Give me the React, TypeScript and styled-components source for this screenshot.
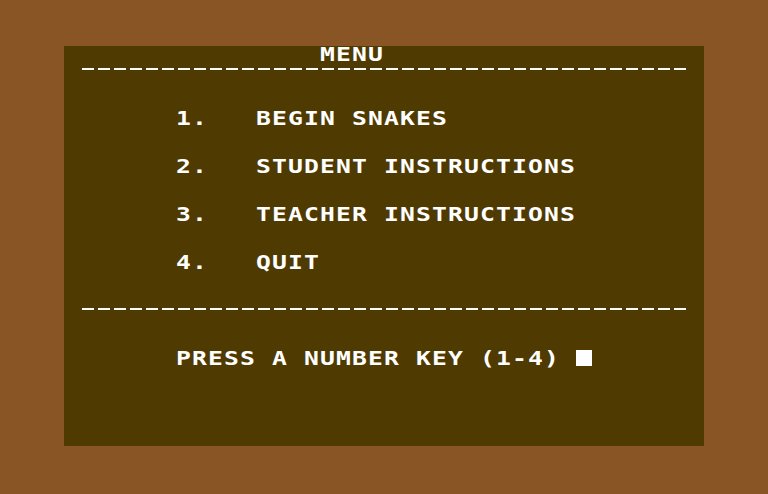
import React from "react";
import styled, { createGlobalStyle } from "styled-components";

const CELL = 16;
const STRETCH = 1.3;

const GlobalStyle = createGlobalStyle`
  html, body {
    margin: 0;
    padding: 0;
    background: #8a5524;
  }
`;

const Border = styled.div`
  width: 768px;
  height: 494px;
  box-sizing: border-box;
  padding: 46px 64px 48px;
  background: #8a5524;
  overflow: hidden;
`;

const Screen = styled.div`
  width: ${40 * CELL}px;
  height: ${25 * CELL}px;
  background: #4f3a02;
  color: #ffffff;
  font-family: "DejaVu Sans Mono", "Liberation Mono", monospace;
  font-weight: bold;
  font-size: 19px;
`;

// one text row of the 40-column screen
const Line = styled.div`
  display: grid;
  grid-template-columns: repeat(40, ${CELL}px);
  height: ${CELL}px;
  line-height: ${CELL}px;
`;

// glyphs are widened so each one fills its 16px cell
const Text = styled.span<{ col: number }>`
  grid-column: ${({ col }) => col + 1} / -1;
  grid-row: 1;
  white-space: pre;
  letter-spacing: ${CELL / STRETCH - 19 * 0.602}px;
  transform: scaleX(${STRETCH});
  transform-origin: left center;
`;

const Rule = styled.div`
  height: ${CELL}px;
  margin-left: ${CELL}px;
  width: ${38 * CELL}px;
  padding-top: 6px;
  box-sizing: border-box;

  &::before {
    content: "";
    display: block;
    height: 2px;
    background: repeating-linear-gradient(
      to right,
      transparent 0 2px,
      #ffffff 2px 14px,
      transparent 14px 16px
    );
  }
`;

const Spacer = styled.div<{ rows: number }>`
  height: ${({ rows }) => rows * CELL}px;
`;

const Cursor = styled.span<{ col: number }>`
  grid-column: ${({ col }) => col + 1};
  grid-row: 1;
  width: ${CELL}px;
  height: ${CELL}px;
  background: #ffffff;
`;

const options = [
  "BEGIN SNAKES",
  "STUDENT INSTRUCTIONS",
  "TEACHER INSTRUCTIONS",
  "QUIT",
];

export default function App() {
  return (
    <>
      <GlobalStyle />
      <Border>
        <Screen>
          <Line>
            <Text col={16}>MENU</Text>
          </Line>
          <Rule />
          <Spacer rows={2} />
          {options.map((label, i) => (
            <React.Fragment key={label}>
              <Line>
                <Text col={7}>{`${i + 1}.   ${label}`}</Text>
              </Line>
              {i < options.length - 1 && <Spacer rows={2} />}
            </React.Fragment>
          ))}
          <Spacer rows={2} />
          <Rule />
          <Spacer rows={2} />
          <Line>
            <Text col={7}>PRESS A NUMBER KEY (1-4)</Text>
            <Cursor col={32} />
          </Line>
        </Screen>
      </Border>
    </>
  );
}
